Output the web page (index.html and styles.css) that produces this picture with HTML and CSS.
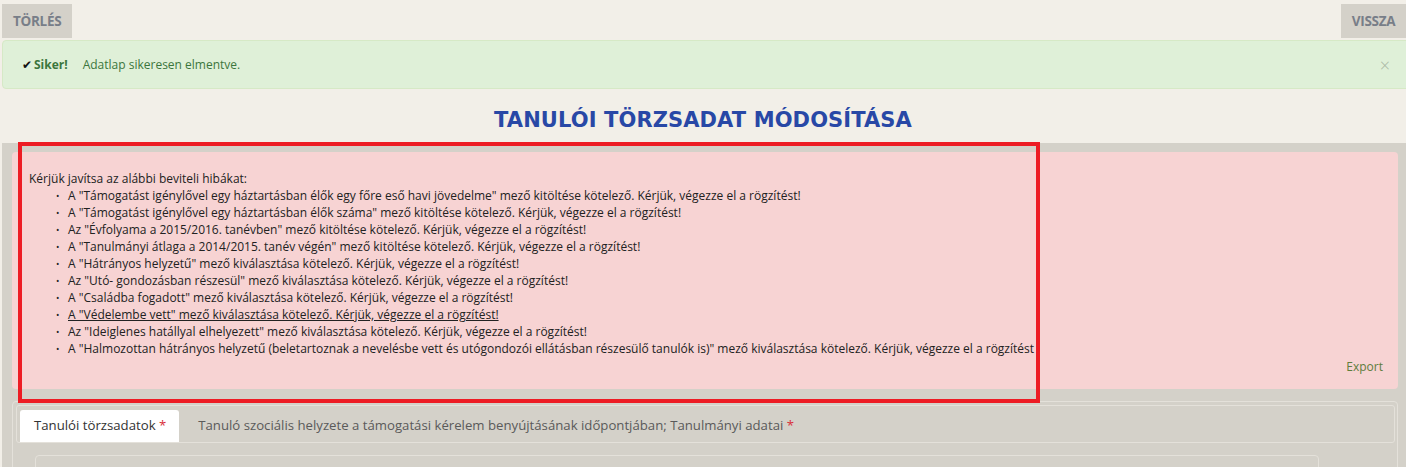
FILE: index.html
```html
<!DOCTYPE html>
<html lang="hu">

<head>
    <meta charset="UTF-8">
    <title>Tanulói törzsadat módosítása</title>
    <link rel="stylesheet" href="styles.css">
</head>

<body>
    <div class="topbar">
        <button class="top-btn">Törlés</button>
        <button class="top-btn">Vissza</button>
    </div>

    <div class="alert-success">
        <span class="check">&#10004;</span>
        <strong>Siker!</strong>
        <span class="alert-msg">Adatlap sikeresen elmentve.</span>
        <span class="close">&times;</span>
    </div>

    <h1 class="page-title">TANULÓI TÖRZSADAT MÓDOSÍTÁSA</h1>

    <div class="section">
        <div class="error-box">
            <p>Kérjük javítsa az alábbi beviteli hibákat:</p>
            <ul>
                <li>A "Támogatást igénylővel egy háztartásban élők egy főre eső havi jövedelme" mező kitöltése kötelező. Kérjük, végezze el a rögzítést!</li>
                <li>A "Támogatást igénylővel egy háztartásban élők száma" mező kitöltése kötelező. Kérjük, végezze el a rögzítést!</li>
                <li>Az "Évfolyama a 2015/2016. tanévben" mező kitöltése kötelező. Kérjük, végezze el a rögzítést!</li>
                <li>A "Tanulmányi átlaga a 2014/2015. tanév végén" mező kitöltése kötelező. Kérjük, végezze el a rögzítést!</li>
                <li>A "Hátrányos helyzetű" mező kiválasztása kötelező. Kérjük, végezze el a rögzítést!</li>
                <li>Az "Utó- gondozásban részesül" mező kiválasztása kötelező. Kérjük, végezze el a rögzítést!</li>
                <li>A "Családba fogadott" mező kiválasztása kötelező. Kérjük, végezze el a rögzítést!</li>
                <li class="hover">A "Védelembe vett" mező kiválasztása kötelező. Kérjük, végezze el a rögzítést!</li>
                <li>Az "Ideiglenes hatállyal elhelyezett" mező kiválasztása kötelező. Kérjük, végezze el a rögzítést!</li>
                <li>A "Halmozottan hátrányos helyzetű (beletartoznak a nevelésbe vett és utógondozói ellátásban részesülő tanulók is)" mező kiválasztása kötelező. Kérjük, végezze el a rögzítést</li>
            </ul>
            <div class="export-row"><a class="export" href="#">Export</a></div>
        </div>

        <div class="tabs-wrap">
            <div class="tab-bar">
                <div class="tab active">Tanulói törzsadatok <span class="req">*</span></div>
                <div class="tab">Tanuló szociális helyzete a támogatási kérelem benyújtásának időpontjában; Tanulmányi adatai <span class="req">*</span></div>
            </div>
            <div class="tab-content"></div>
        </div>

        <!-- kiemelés a képernyőképen -->
        <div class="highlight"></div>
    </div>
</body>

</html>
```

FILE: styles.css
```css
html,
body {
    margin: 0;
    padding: 0;
    background: #f2efe8;
    font-family: 'Open Sans', 'Noto Sans', sans-serif;
    font-size: 12px;
    color: #333;
    overflow: hidden;
}

.topbar {
    display: flex;
    justify-content: space-between;
    padding: 4px 0 0 2px;
}

.top-btn {
    height: 34px;
    padding: 0 11px;
    border: none;
    background: #d4d1c9;
    color: #787e88;
    font-family: 'Open Sans', sans-serif;
    font-size: 13.5px;
    font-weight: bold;
    text-transform: uppercase;
    letter-spacing: -0.3px;
}

.top-btn:last-child {
    padding: 0 8px;
    width: 65px;
}

.alert-success {
    display: flex;
    align-items: center;
    height: 47px;
    margin: 2px -4px 0 2px;
    padding: 0 15px 0 19px;
    background: #dff0d8;
    border: 1px solid #d6e9c6;
    border-radius: 4px;
    color: #3c763d;
}

.alert-success .check {
    font-size: 12px;
    margin-right: 2px;
    color: #111;
}

.alert-success strong {
    margin-right: 15px;
}

.alert-msg {
    flex: 1;
}

.close {
    font-size: 18px;
    color: #a8b6a2;
    margin-right: 4px;
    font-weight: 300;
}

.page-title {
    margin: 0;
    padding: 19px 0 0;
    height: 35px;
    text-align: center;
    font-family: 'DejaVu Sans', sans-serif;
    font-weight: bold;
    font-size: 21px;
    letter-spacing: 0.1px;
    color: #2848a6;
}

.section {
    position: relative;
    margin-left: 2px;
    padding: 9px 8px 20px 10px;
    background: #d4d1c9;
}

.error-box {
    background: #f7d3d3;
    border-radius: 4px;
    padding: 18px 15px 14px 17px;
    color: #222;
}

.error-box p {
    margin: 0;
    line-height: 17px;
}

.error-box ul {
    margin: 0;
    padding-left: 39px;
    list-style: none;
}

.error-box li {
    line-height: 17px;
    position: relative;
}

.error-box li::before {
    content: "•";
    position: absolute;
    left: -12px;
    font-size: 9px;
}

.error-box li.hover {
    text-decoration: underline;
}

.export-row {
    text-align: right;
    margin-top: 1px;
}

.export {
    color: #5e7d3c;
    text-decoration: none;
    line-height: 17px;
}

.tabs-wrap {
    margin-top: 12px;
    border: 1px solid #e4e1da;
    border-radius: 4px;
    padding: 3px 2px 0 3px;
}

.tab-bar {
    display: flex;
    align-items: flex-end;
    height: 36px;
    border: 1px solid #e4e1da;
    border-radius: 3px;
    padding: 0 3px;
}

.tab {
    padding: 0 13px 0 18px;
    height: 32px;
    line-height: 30px;
    font-size: 13.2px;
    color: #5a5a5a;
}

.tab.active {
    background: #fff;
    color: #333;
    border-radius: 3px 3px 0 0;
    padding: 0 13px 0 14px;
    margin-right: 1px;
}

.req {
    color: #d9303a;
}

.tab-content {
    margin: 12px 76px 0 19px;
    height: 40px;
    border: 1px solid #e4e1da;
    border-radius: 4px;
}

.highlight {
    position: absolute;
    left: 16px;
    top: -1px;
    width: 1014px;
    height: 253px;
    border: 4px solid #ed1c24;
    pointer-events: none;
}
```
